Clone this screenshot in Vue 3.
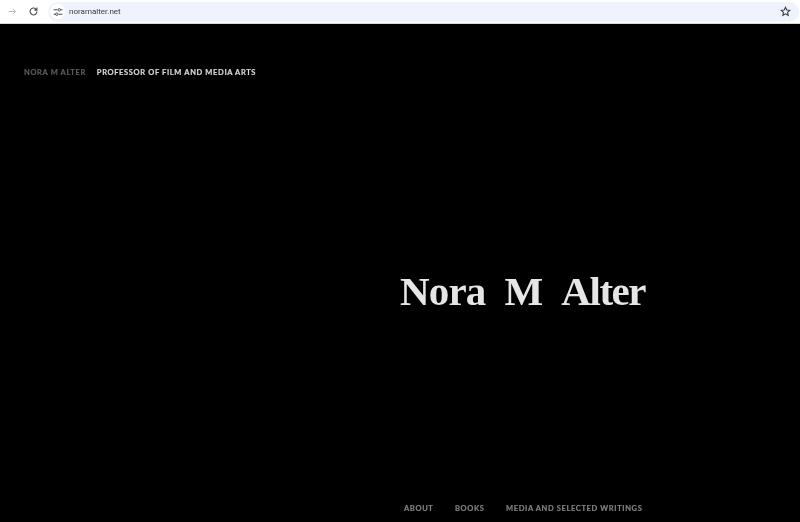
<template>
  <div class="page">
    <div class="toolbar">
      <svg class="nav-icon" viewBox="0 0 16 16" width="11" height="11">
        <path d="M2.5 8h10M8.5 4l4 4-4 4" fill="none" stroke="#b4b6ba" stroke-width="1.4" />
      </svg>
      <svg class="nav-icon reload" viewBox="0 0 16 16" width="11" height="11">
        <path d="M13 8a5 5 0 1 1-1.5-3.6L13 6M13 2.2V6H9.2" fill="none" stroke="#474a4f" stroke-width="1.6" />
      </svg>
      <div class="address">
        <span class="tune">
          <svg viewBox="0 0 16 16" width="10" height="10">
            <path d="M1 4.5h6M12.5 4.5h2.5M3.5 11.5H1M9 11.5h6" fill="none" stroke="#474a4f" stroke-width="1.7" />
            <circle cx="10" cy="4.5" r="2" fill="none" stroke="#474a4f" stroke-width="1.5" />
            <circle cx="6" cy="11.5" r="2" fill="none" stroke="#474a4f" stroke-width="1.5" />
          </svg>
        </span>
        <span class="url">noramalter.net</span>
        <svg class="star" viewBox="0 0 16 16" width="11" height="11">
          <path d="M8 1.8l1.9 4 4.3.5-3.2 3 .9 4.3L8 11.4l-3.9 2.2.9-4.3-3.2-3 4.3-.5z" fill="none" stroke="#3c3f44" stroke-width="1.6" />
        </svg>
      </div>
    </div>
    <div class="site">
      <header class="top">
        <span class="name">NORA M ALTER</span>
        <span class="role">PROFESSOR OF FILM AND MEDIA ARTS</span>
      </header>
      <h1 class="title">
        <span>Nora</span>
        <span>M</span>
        <span class="last">Alter</span>
      </h1>
      <nav class="menu">
        <a v-for="item in links" :key="item">{{ item }}</a>
      </nav>
    </div>
  </div>
</template>

<script setup>
const links = ['ABOUT', 'BOOKS', 'MEDIA AND SELECTED WRITINGS']
</script>

<style scoped>
.page {
  width: 800px;
  height: 522px;
  display: flex;
  flex-direction: column;
  overflow: hidden;
  background: #000;
}

.toolbar {
  height: 23px;
  flex: none;
  display: flex;
  align-items: center;
  padding-left: 7px;
  padding-right: 1px;
  background: #fff;
  border-bottom: 1px solid #d8d8d8;
}

.nav-icon {
  flex: none;
}

.reload {
  margin-left: 10px;
}

.address {
  flex: 1;
  height: 20px;
  margin-left: 9px;
  display: flex;
  align-items: center;
  padding-left: 2px;
  padding-right: 8px;
  border-radius: 10px;
  background: #eff3fb;
}

.tune {
  width: 15px;
  height: 15px;
  display: flex;
  align-items: center;
  justify-content: center;
  border-radius: 50%;
  background: #fff;
}

.url {
  margin-left: 4px;
  font: 8px "Roboto", "Liberation Sans", sans-serif;
  color: #3a3c40;
  will-change: transform;
}

.star {
  margin-left: auto;
}

.site {
  flex: 1;
  display: flex;
  flex-direction: column;
  padding-left: 24px;
  font-family: "Lato", "Open Sans", sans-serif;
  font-weight: 700;
  will-change: transform;
}

.top {
  margin-top: 44px;
  display: flex;
  gap: 11px;
  font-size: 7.5px;
  line-height: 10px;
  letter-spacing: 0.64px;
  -webkit-text-stroke: 0.2px;
}

.name {
  color: #5c5c5c;
}

.role {
  color: #d8d8d8;
}

.title {
  margin: 188px 0 0 376px;
  display: flex;
  gap: 19px;
  font-family: "Liberation Serif", "DejaVu Serif", serif;
  font-size: 41px;
  line-height: 50px;
  letter-spacing: -0.85px;
  font-weight: 700;
  color: #e6e6e6;
  white-space: nowrap;
}

.last {
  letter-spacing: -1.45px;
}

.menu {
  margin-top: auto;
  margin-bottom: 8px;
  margin-left: 380px;
  display: flex;
  gap: 21.5px;
  font-size: 7.5px;
  line-height: 10px;
  letter-spacing: 0.64px;
  color: #808080;
  -webkit-text-stroke: 0.2px;
}
</style>
